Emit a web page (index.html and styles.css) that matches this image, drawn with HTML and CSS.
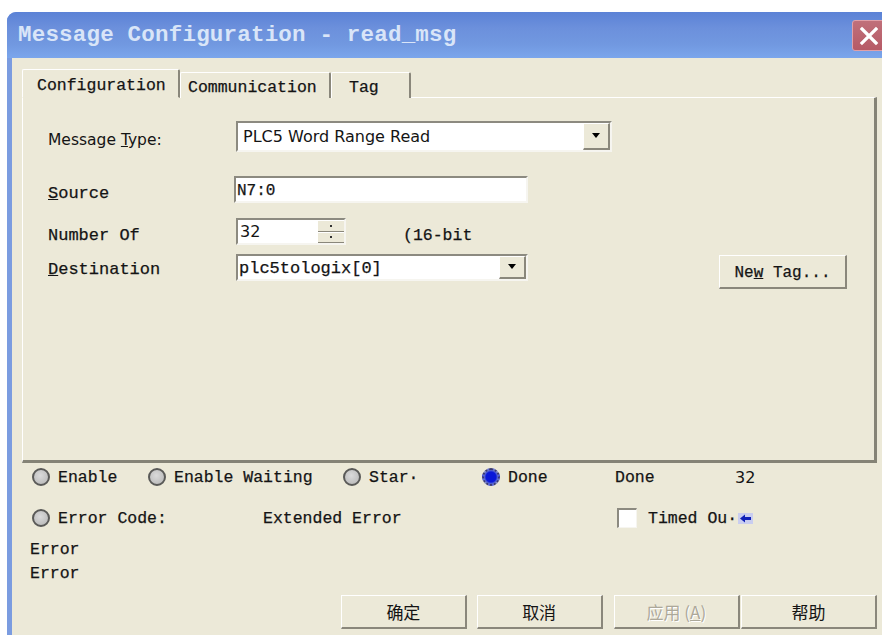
FILE: index.html
```html
<!DOCTYPE html>
<html lang="en">
<head>
<meta charset="utf-8">
<title>Message Configuration - read_msg</title>
<link rel="stylesheet" href="styles.css">
</head>
<body>
<div class="window">
  <div class="titlebar">
    <span class="title">Message Configuration - read_msg</span>
    <span class="close">
      <svg width="20" height="20" viewBox="0 0 20 20"><path d="M3 3 L17 17 M17 3 L3 17" stroke="#fff" stroke-width="3.2" stroke-linecap="square"/></svg>
    </span>
  </div>
  <div class="client">
    <div class="tabs">
      <div class="tab tab-active tab-config">Configuration</div>
      <div class="tab tab-comm">Communication</div>
      <div class="tab tab-tag">Tag</div>
    </div>
    <div class="panel">
      <div class="row row-type">
        <span class="label sans">Message <u>T</u>ype:</span>
        <div class="combo combo-type">
          <span class="combo-text sans">PLC5 Word Range Read</span>
          <span class="drop"><svg width="10" height="6" viewBox="0 0 10 6"><path d="M1 0 H9 L5 5 Z" fill="#000"/></svg></span>
        </div>
      </div>
      <div class="row row-source">
        <span class="label"><u>S</u>ource</span>
        <div class="edit edit-source">N7:0</div>
      </div>
      <div class="row row-count">
        <span class="label">Number Of</span>
        <div class="spin">
          <span class="spin-text sans">32</span>
          <span class="spin-btns">
            <span class="spin-btn"><i class="dot"></i></span>
            <span class="spin-btn"><i class="dot"></i></span>
          </span>
        </div>
        <span class="bits">(16-bit</span>
      </div>
      <div class="row row-dest">
        <span class="label"><u>D</u>estination</span>
        <div class="combo combo-dest">
          <span class="combo-text">plc5tologix[0]</span>
          <span class="drop"><svg width="10" height="6" viewBox="0 0 10 6"><path d="M1 0 H9 L5 5 Z" fill="#000"/></svg></span>
        </div>
        <button class="btn btn-newtag">Ne<u>w</u> Tag...</button>
      </div>
    </div>

    <div class="status status-a">
      <span class="item w-enable"><i class="radio"></i>Enable</span>
      <span class="item w-waiting"><i class="radio"></i>Enable Waiting</span>
      <span class="item w-start"><i class="radio"></i>Star·</span>
      <span class="item w-done"><i class="radio radio-on"></i>Done</span>
      <span class="item w-donelbl">Done</span>
      <span class="item sans count">32</span>
    </div>
    <div class="status status-b">
      <span class="item w-errcode"><i class="radio"></i>Error Code:</span>
      <span class="item w-exterr">Extended Error</span>
      <span class="item"><i class="check"></i>Timed Ou·<svg class="arrow" width="15" height="11" viewBox="0 0 15 11"><rect width="15" height="11" fill="#c9cdf0"/><path d="M2 5.5 L7 1.5 V4 H13 V7 H7 V9.5 Z" fill="#1020b8"/></svg></span>
    </div>
    <div class="errors">
      <div>Error</div>
      <div>Error</div>
    </div>
    <div class="buttons">
      <button class="btn dlg btn-ok">确定</button>
      <button class="btn dlg btn-cancel">取消</button>
      <button class="btn dlg btn-apply" disabled>应用 (<u>A</u>)</button>
      <button class="btn dlg btn-help">帮助</button>
    </div>
  </div>
</div>
</body>
</html>
```
FILE: styles.css
```css
* { box-sizing: border-box; }

html, body {
  margin: 0;
  background: #fff;
  width: 882px;
  height: 635px;
  overflow: hidden;
}

body {
  font-family: "Liberation Mono", "DejaVu Sans Mono", monospace;
  font-size: 17px;
  color: #141414;
  -webkit-text-stroke: 0.25px #141414;
}

.sans {
  font-family: "DejaVu Sans", "Noto Sans", sans-serif;
  -webkit-text-stroke: 0;
}

/* window frame */
.window {
  margin: 12px 0 0 7px;
  width: 875px;
  height: 623px;
  border-radius: 9px 0 0 0;
  background: #7b9ce0;
  display: flex;
  flex-direction: column;
  overflow: hidden;
}

.titlebar {
  flex: none;
  height: 46px;
  display: flex;
  align-items: center;
  padding-left: 11px;
  background: linear-gradient(#5b82d6 0%, #6c90dc 35%, #7198e0 70%, #7ba6ec 100%);
}

.title {
  font: bold 22.5px "Liberation Mono", monospace;
  color: #d9e5f8;
  -webkit-text-stroke: 0;
  letter-spacing: 0.2px;
}

.close {
  margin-left: auto;
  margin-right: -3px;
  width: 33px;
  height: 31px;
  border: 1px solid #e0a0a8;
  border-radius: 3px;
  background: linear-gradient(#c0707a, #b65a66);
  display: flex;
  align-items: center;
  justify-content: center;
  margin-top: 1px;
}

/* dialog client area */
.client {
  flex: 1;
  margin-left: 5px;
  background: #ece9d8;
  padding: 12px 5px 0 10px;
  display: flex;
  flex-direction: column;
}

.tabs {
  display: flex;
  align-items: flex-end;
  height: 28px;
  position: relative;
  z-index: 1;
  margin-bottom: -1px;
}

.tab {
  height: 26px;
  border-top: 1px solid #fff;
  border-left: 1px solid #fff;
  border-right: 2px solid #8a877b;
  border-radius: 2px 2px 0 0;
  display: flex;
  align-items: center;
  padding-top: 4px;
  font-size: 16.5px;
  background: #ece9d8;
}

.tab-active {
  height: 29px;
  border-bottom: 1px solid #ece9d8;
}
.tab-config { width: 158px; padding-left: 14px; }
.tab-comm { width: 151px; padding-left: 7px; }
.tab-tag { width: 80px; padding-left: 17px; }

.panel {
  height: 366px;
  border-top: 1px solid #fff;
  border-left: 1px solid #fff;
  border-right: 3px solid #858376;
  border-bottom: 3px solid #858376;
  padding-left: 25px;
  display: flex;
  flex-direction: column;
}

.row { display: flex; align-items: center; }
.label { width: 188px; flex: none; padding-top: 8px; }
.label.sans { font-size: 15.5px; padding-top: 6px; }

.row-type { margin-top: 23px; height: 31px; }
.row-source { margin-top: 24px; height: 27px; }
.row-count { margin-top: 15px; height: 27px; }
.row-dest { margin-top: 9px; height: 34px; align-items: flex-start; }
.row-dest .label { padding-top: 6px; }

/* sunken white fields */
.combo, .edit, .spin {
  background: #fff;
  border-top: 2px solid #8c8a80;
  border-left: 2px solid #8c8a80;
  border-bottom: 2px solid #f6f5f0;
  border-right: 2px solid #f6f5f0;
  display: flex;
  align-items: center;
}

.combo-type { width: 376px; height: 31px; }
.combo-type .combo-text { font-size: 16px; padding-left: 5px; flex: 1; }
.combo-dest { width: 292px; height: 27px; }
.combo-dest .combo-text { flex: 1; padding-left: 1px; padding-top: 2px; }

.drop {
  width: 27px;
  height: 100%;
  background: #ece9d8;
  border-top: 1px solid #fff;
  border-left: 1px solid #fff;
  border-right: 2px solid #8a877b;
  border-bottom: 2px solid #8a877b;
  display: flex;
  align-items: center;
  justify-content: center;
}

.edit-source { width: 294px; height: 27px; margin-left: -2px; padding: 2px 0 0 1px; font-size: 16px; }

.spin { width: 110px; height: 27px; }
.spin-text { flex: 1; padding-left: 2px; font-size: 16px; }
.spin-btns {
  width: 26px;
  height: 100%;
  display: flex;
  flex-direction: column;
  background: #ece9d8;
}
.spin-btn {
  flex: 1;
  border-top: 1px solid #fff;
  border-bottom: 1px solid #8a877b;
  display: flex;
  align-items: center;
  justify-content: center;
}
.dot { width: 2px; height: 2px; background: #333; }

.bits { margin-left: 57px; font-size: 16.5px; padding-top: 8px; }

.btn {
  font-family: inherit;
  color: #141414;
  background: #ece9d8;
  border-top: 1px solid #fff;
  border-left: 1px solid #fff;
  border-right: 2px solid #8a877b;
  border-bottom: 2px solid #8a877b;
  border-radius: 0;
  padding: 0;
}

.btn-newtag {
  margin-left: auto;
  margin-right: 27px;
  margin-top: 1px;
  width: 128px;
  height: 34px;
  font-size: 16px;
  padding-top: 3px;
}

/* status rows */
.status { display: flex; align-items: center; height: 20px; padding-left: 10px; font-size: 16.5px; }
.status-a { margin-top: 4px; }
.status-b { margin-top: 21px; }
.item { display: flex; align-items: center; flex: none; white-space: nowrap; }
.w-enable { width: 116px; }
.w-waiting { width: 195px; }
.w-start { width: 139px; }
.w-done { width: 133px; }
.w-donelbl { width: 120px; }
.count { font-size: 16px; }
.w-errcode { width: 231px; }
.w-exterr { width: 354px; }

.radio {
  width: 18px;
  height: 18px;
  border-radius: 50%;
  margin-right: 8px;
  border: 2px solid #5a5a58;
  background: radial-gradient(circle at 45% 40%, #dadada, #b4b4b4);
  flex: none;
}
.radio-on {
  border: 2px dotted #3a3a70;
  background: radial-gradient(circle, #0a18d8 0 5px, #3c4cd8 6px, #9098c8 8px);
}

.check {
  width: 20px;
  height: 20px;
  margin-right: 11px;
  background: #fff;
  border-top: 2px solid #8c8a80;
  border-left: 2px solid #8c8a80;
  border-bottom: 1px solid #f6f5f0;
  border-right: 1px solid #f6f5f0;
  flex: none;
}

.arrow { margin-left: 1px; }

.errors {
  margin-top: 10px;
  padding-left: 8px;
  font-size: 16.5px;
  line-height: 24px;
}

.buttons {
  margin-top: 9px;
  display: flex;
  padding-left: 319px;
}

.dlg {
  height: 34px;
  font-family: "Noto Sans CJK SC", sans-serif;
  font-size: 17px;
  -webkit-text-stroke: 0;
}
.btn-ok { width: 126px; }
.btn-cancel { width: 126px; margin-left: 10px; }
.btn-apply {
  width: 127px;
  margin-left: 11px;
  color: #aca899;
  text-shadow: 1px 1px 0 #fff;
}
.btn-help { width: 136px; margin-left: 1px; }
```
